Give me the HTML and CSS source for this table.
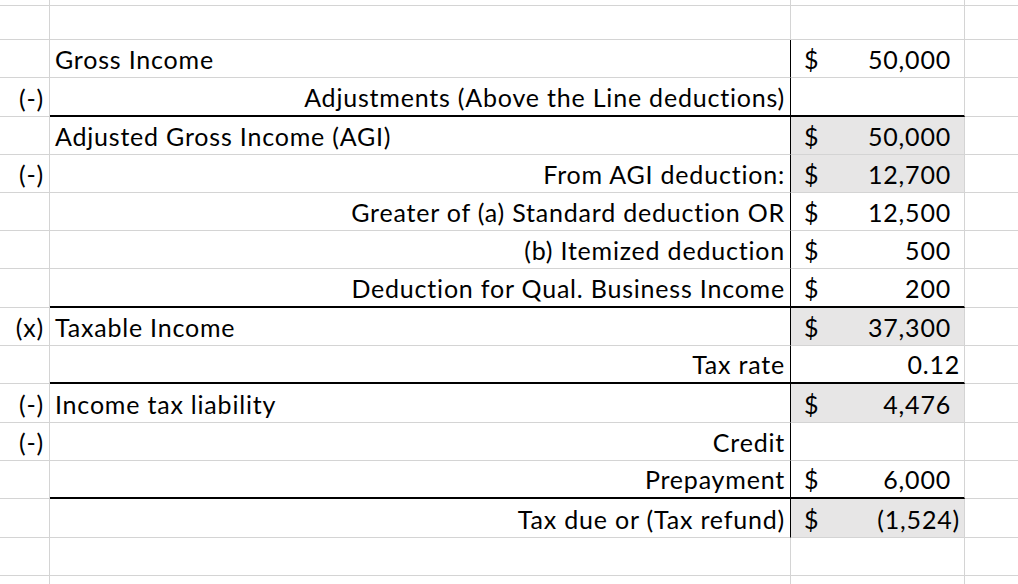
FILE: index.html
```html
<!DOCTYPE html>
<html lang="en">
<head>
<meta charset="utf-8">
<title>Tax computation</title>
<link rel="stylesheet" href="styles.css">
</head>
<body>
<div class="sheet">
  <!-- row 0 (partial) -->
  <div class="cell"></div><div class="cell"></div><div class="cell"></div><div class="cell last"></div>
  <!-- row 1 -->
  <div class="cell"></div><div class="cell"></div><div class="cell"></div><div class="cell last"></div>
  <!-- row 2 -->
  <div class="cell ca"></div>
  <div class="cell cb vline"><span class="t">Gross Income</span></div>
  <div class="cell cc"><span class="t dollar">$</span><span class="t num pos">50,000</span></div>
  <div class="cell last"></div>
  <!-- row 3 -->
  <div class="cell ca"><span class="t">(-)</span></div>
  <div class="cell cb vline right thick"><span class="t">Adjustments (Above the Line deductions)</span></div>
  <div class="cell cc thick"></div>
  <div class="cell last"></div>
  <!-- row 4 -->
  <div class="cell ca"></div>
  <div class="cell cb vline"><span class="t">Adjusted Gross Income (AGI)</span></div>
  <div class="cell cc shade"><span class="t dollar">$</span><span class="t num pos">50,000</span></div>
  <div class="cell last"></div>
  <!-- row 5 -->
  <div class="cell ca"><span class="t">(-)</span></div>
  <div class="cell cb vline right"><span class="t">From AGI deduction:</span></div>
  <div class="cell cc shade"><span class="t dollar">$</span><span class="t num pos">12,700</span></div>
  <div class="cell last"></div>
  <!-- row 6 -->
  <div class="cell ca"></div>
  <div class="cell cb vline right"><span class="t">Greater of (a) Standard deduction OR</span></div>
  <div class="cell cc"><span class="t dollar">$</span><span class="t num pos">12,500</span></div>
  <div class="cell last"></div>
  <!-- row 7 -->
  <div class="cell ca"></div>
  <div class="cell cb vline right"><span class="t">(b) Itemized deduction</span></div>
  <div class="cell cc"><span class="t dollar">$</span><span class="t num pos">500</span></div>
  <div class="cell last"></div>
  <!-- row 8 -->
  <div class="cell ca"></div>
  <div class="cell cb vline right thick"><span class="t">Deduction for Qual. Business Income</span></div>
  <div class="cell cc thick"><span class="t dollar">$</span><span class="t num pos">200</span></div>
  <div class="cell last"></div>
  <!-- row 9 -->
  <div class="cell ca"><span class="t">(x)</span></div>
  <div class="cell cb vline"><span class="t">Taxable Income</span></div>
  <div class="cell cc shade"><span class="t dollar">$</span><span class="t num pos">37,300</span></div>
  <div class="cell last"></div>
  <!-- row 10 -->
  <div class="cell ca"></div>
  <div class="cell cb vline right thick"><span class="t">Tax rate</span></div>
  <div class="cell cc thick"><span class="t num">0.12</span></div>
  <div class="cell last"></div>
  <!-- row 11 -->
  <div class="cell ca"><span class="t">(-)</span></div>
  <div class="cell cb vline"><span class="t">Income tax liability</span></div>
  <div class="cell cc shade"><span class="t dollar">$</span><span class="t num pos">4,476</span></div>
  <div class="cell last"></div>
  <!-- row 12 -->
  <div class="cell ca"><span class="t">(-)</span></div>
  <div class="cell cb vline right"><span class="t">Credit</span></div>
  <div class="cell cc"></div>
  <div class="cell last"></div>
  <!-- row 13 -->
  <div class="cell ca"></div>
  <div class="cell cb vline right thick"><span class="t">Prepayment</span></div>
  <div class="cell cc thick"><span class="t dollar">$</span><span class="t num pos">6,000</span></div>
  <div class="cell last"></div>
  <!-- row 14 -->
  <div class="cell ca"></div>
  <div class="cell cb vline right"><span class="t">Tax due or (Tax refund)</span></div>
  <div class="cell cc shade"><span class="t dollar">$</span><span class="t num">(1,524)</span></div>
  <div class="cell last"></div>
  <!-- row 15 -->
  <div class="cell"></div><div class="cell"></div><div class="cell"></div><div class="cell last"></div>
  <!-- row 16 -->
  <div class="cell"></div><div class="cell"></div><div class="cell"></div><div class="cell last"></div>
</div>
</body>
</html>
```

FILE: styles.css
```css
html, body {
  margin: 0;
  padding: 0;
  background: #ffffff;
}

body {
  font-family: "Lato", "Carlito", "Open Sans", sans-serif;
  font-size: 25px;
  letter-spacing: 0.8px;
  color: #000000;
  overflow: hidden;
}

.sheet {
  display: grid;
  width: 1018px;
  height: 584px;
  grid-template-columns: 50px 741px 174px 53px;
  grid-template-rows: 2px 38px 38px 39px 38px 38px 38px 38px 39px 38px 38px 39px 38px 38px 39px 38px 9px;
  overflow: hidden;
}

.cell {
  box-sizing: border-box;
  border-right: 1px solid #d4d4d4;
  border-bottom: 1px solid #d4d4d4;
  display: flex;
  align-items: flex-end;
  padding-bottom: 5px;
  white-space: nowrap;
  overflow: visible;
  min-width: 0;
}

.cell.last {
  border-right: none;
}

.t {
  line-height: 1;
  display: block;
}

.ca {
  justify-content: flex-end;
  padding-right: 5px;
}

.cb {
  padding-left: 5px;
  padding-right: 5px;
}

.cb.right {
  justify-content: flex-end;
}

.cc {
  padding-left: 13px;
  padding-right: 4px;
}

.dollar {
  margin-right: auto;
}

.num {
  margin-left: auto;
}

.num.pos {
  padding-right: 9px;
}

.vline {
  border-right: 1px solid #000000;
}

.thick {
  border-bottom: 2px solid #000000;
}

.shade {
  background: #e7e6e6;
}
```
